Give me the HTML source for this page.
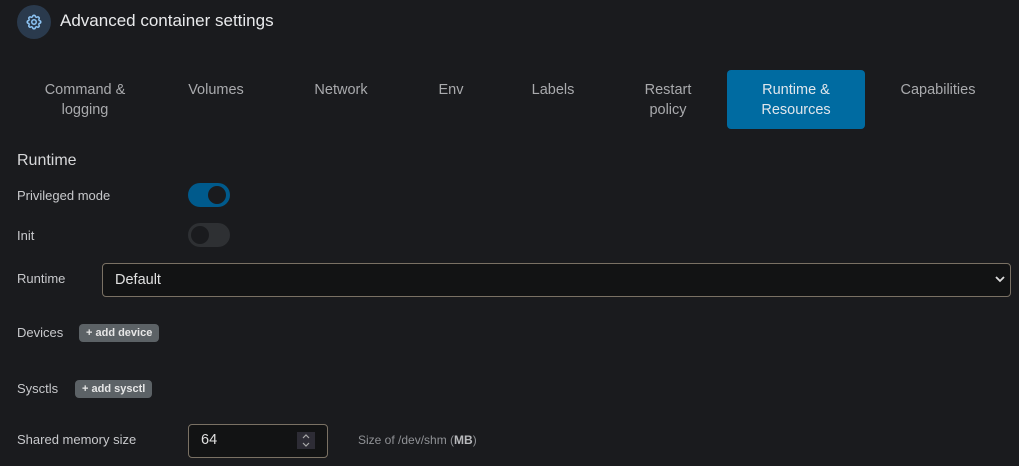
<!DOCTYPE html>
<html><head><style>
body{margin:0;width:1019px;height:466px;background:#1a1b1e;font-family:"Liberation Sans",sans-serif;color:#c1c2c5;position:relative;overflow:hidden}
.a{position:absolute}
.tab{position:absolute;top:80px;text-align:center;font-size:14.5px;line-height:20px;color:#a9aaad;transform:translateX(-50%);white-space:nowrap}
.lbl{position:absolute;left:17px;font-size:13px;color:#c8c9cc}
.btn{position:absolute;height:18px;background:#5c6266;border-radius:4px;color:#e6e6e6;font-size:11px;font-weight:bold;line-height:18px;padding:0 7px;white-space:nowrap}
</style></head><body>
<div class="a" style="left:17px;top:5px;width:34px;height:34px;border-radius:50%;background:#2a3a4d"></div>
<svg class="a" style="left:25px;top:13px" width="18" height="18" viewBox="0 0 24 24" fill="none" stroke="#8ec5f5" stroke-width="2" stroke-linecap="round" stroke-linejoin="round"><path d="M10.3 4.3c.4-1.8 3-1.8 3.4 0a1.7 1.7 0 0 0 2.6 1.1c1.5-.9 3.3.8 2.4 2.4a1.7 1.7 0 0 0 1 2.5c1.8.4 1.8 3 0 3.4a1.7 1.7 0 0 0-1 2.6c.9 1.5-.9 3.3-2.4 2.4a1.7 1.7 0 0 0-2.6 1c-.4 1.8-3 1.8-3.4 0a1.7 1.7 0 0 0-2.6-1c-1.5.9-3.3-.9-2.4-2.4a1.7 1.7 0 0 0-1-2.6c-1.8-.4-1.8-3 0-3.4a1.7 1.7 0 0 0 1-2.5c-.9-1.6.9-3.3 2.4-2.4a1.7 1.7 0 0 0 2.6-1.1z"/><circle cx="12" cy="12" r="3"/></svg>
<div class="a" style="left:60px;top:11px;font-size:17px;color:#e9eaec">Advanced container settings</div>

<div class="tab" style="left:85px">Command &amp;<br>logging</div>
<div class="tab" style="left:216px">Volumes</div>
<div class="tab" style="left:341px">Network</div>
<div class="tab" style="left:451px">Env</div>
<div class="tab" style="left:553px">Labels</div>
<div class="tab" style="left:668px">Restart<br>policy</div>
<div class="a" style="left:727px;top:70px;width:138px;height:59px;background:#006ba1;border-radius:4px"></div>
<div class="tab" style="left:796px;color:#e0e6ec">Runtime &amp;<br>Resources</div>
<div class="tab" style="left:938px">Capabilities</div>

<div class="a" style="left:17px;top:152px;font-size:16px;color:#d6d7d9">Runtime</div>
<div class="lbl" style="top:188px">Privileged mode</div>
<div class="a" style="left:188px;top:183px;width:42px;height:24px;border-radius:12px;background:#005a8c"></div>
<div class="a" style="left:208px;top:186px;width:18px;height:18px;border-radius:50%;background:#1a1b1e"></div>
<div class="lbl" style="top:228px">Init</div>
<div class="a" style="left:188px;top:223px;width:42px;height:24px;border-radius:12px;background:#2e3033"></div>
<div class="a" style="left:191px;top:226px;width:18px;height:18px;border-radius:50%;background:#1a1b1e"></div>

<div class="lbl" style="top:271px">Runtime</div>
<div class="a" style="left:102px;top:263px;width:907px;height:32px;border:1px solid #7a7164;border-radius:4px;background:#121314"></div>
<div class="a" style="left:115px;top:272px;font-size:14.5px;color:#e0e0e0">Default</div>
<svg class="a" style="left:995px;top:275px" width="10" height="8" viewBox="0 0 10 8"><path d="M1 2l4 4 4-4" stroke="#ddd" stroke-width="1.8" fill="none"/></svg>

<div class="lbl" style="top:325px">Devices</div>
<div class="btn" style="left:79px;top:324px">+ add device</div>
<div class="lbl" style="top:381px">Sysctls</div>
<div class="btn" style="left:75px;top:380px">+ add sysctl</div>

<div class="lbl" style="top:432px">Shared memory size</div>
<div class="a" style="left:188px;top:424px;width:138px;height:32px;border:1px solid #7a7164;border-radius:4px;background:#121314"></div>
<div class="a" style="left:201px;top:432px;font-size:14.5px;color:#e0e0e0">64</div>
<div class="a" style="left:297px;top:432px;width:18px;height:17px;background:#2d2c35"></div>
<svg class="a" style="left:300px;top:433px" width="12" height="15" viewBox="0 0 12 15"><path d="M3 5l3-3 3 3M3 10l3 3 3-3" stroke="#aaa" stroke-width="1.2" fill="none"/></svg>
<div class="a" style="left:358px;top:433px;font-size:12px;color:#909296">Size of /dev/shm (<b style="color:#b8b9bc">MB</b>)</div>
</body></html>
